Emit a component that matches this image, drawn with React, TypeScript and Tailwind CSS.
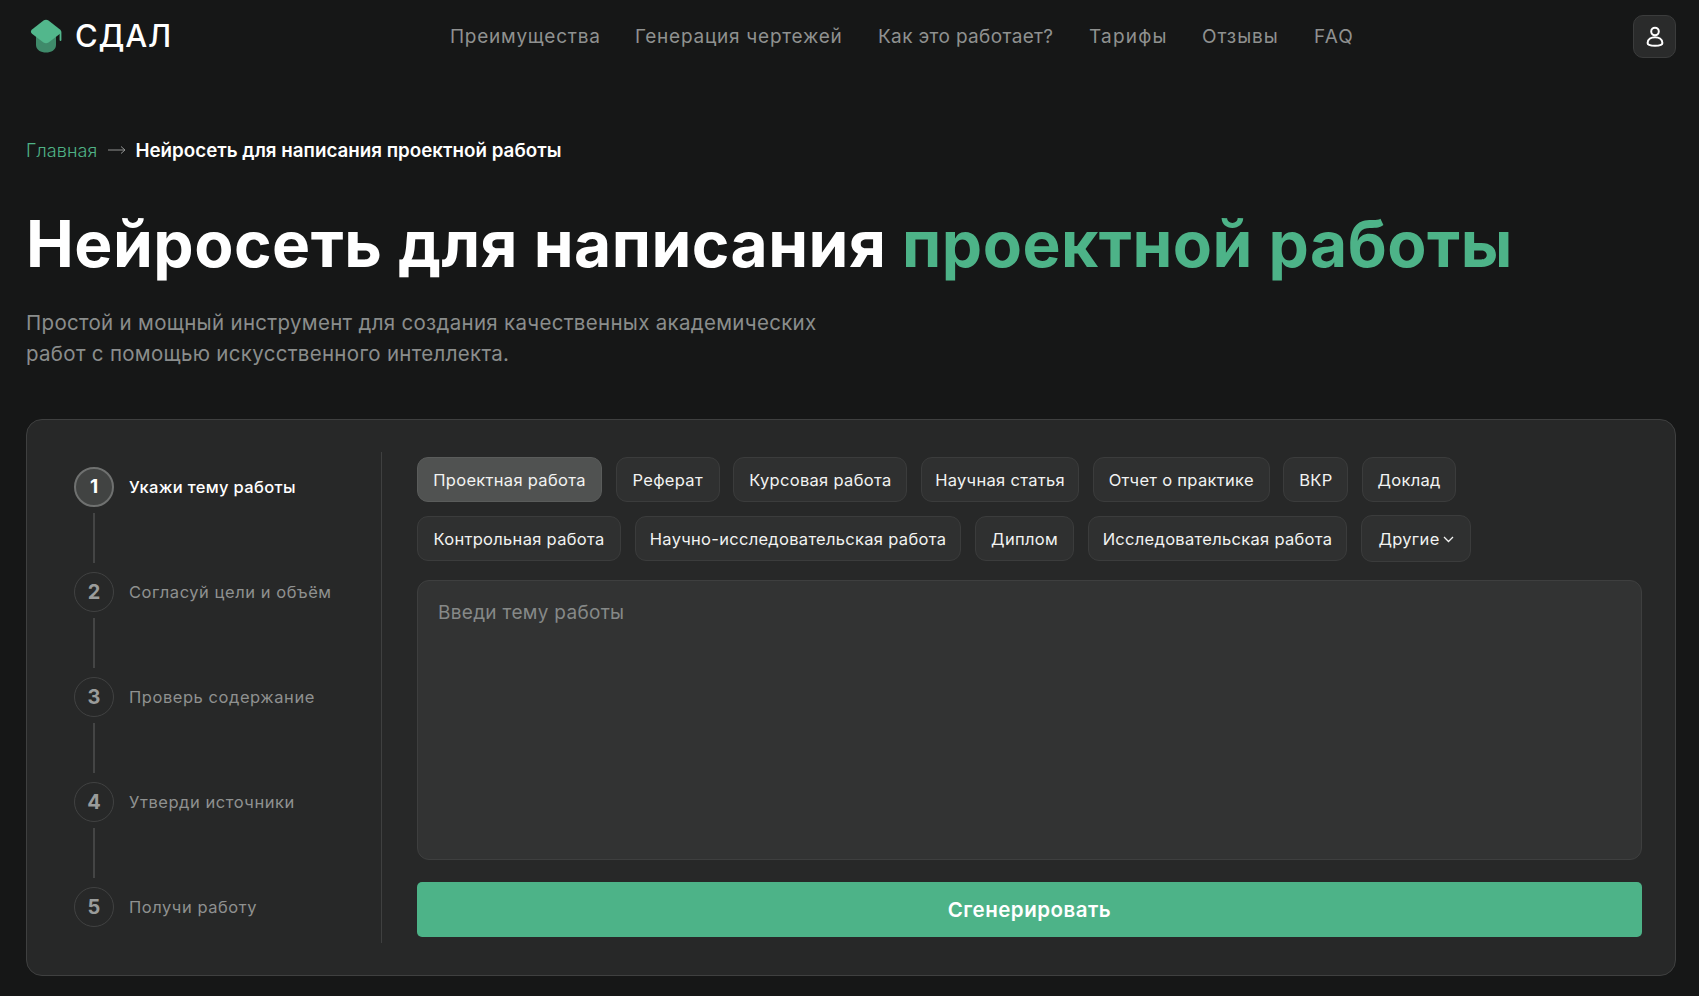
const navItems = [
  { label: "Преимущества", cls: "w-[150px] tracking-[0.75px]" },
  { label: "Генерация чертежей", cls: "w-[208px] tracking-[0.75px]" },
  { label: "Как это работает?", cls: "w-[176px] tracking-[0.35px]" },
  { label: "Тарифы", cls: "w-[78px] tracking-[1.2px]" },
  { label: "Отзывы", cls: "w-[77px] tracking-[0.9px]" },
  { label: "FAQ", cls: "w-[40px] tracking-[1.2px]" },
]

const rowOne = [
  { label: "Проектная работа", w: "w-[185px]", active: true },
  { label: "Реферат", w: "w-[104px]" },
  { label: "Курсовая работа", w: "w-[174px]" },
  { label: "Научная статья", w: "w-[158px]" },
  { label: "Отчет о практике", w: "w-[177px]" },
  { label: "ВКР", w: "w-[65px]" },
  { label: "Доклад", w: "w-[94px]" },
]

const rowTwo = [
  { label: "Контрольная работа", w: "w-[204px]" },
  { label: "Научно-исследовательская работа", w: "w-[326px]" },
  { label: "Диплом", w: "w-[99px]" },
  { label: "Исследовательская работа", w: "w-[259px]" },
]

const steps = ["Укажи тему работы", "Согласуй цели и объём", "Проверь содержание", "Утверди источники", "Получи работу"]

function Logo() {
  return (
    <svg width="32" height="34" viewBox="0 0 32 34" fill="none">
      <path d="M6 12 H26 V26 C26 31 21 33.5 16 33.5 C11 33.5 6 31 6 26 Z" fill="#3f8a6a" />
      <path d="M2 10.5 L13.5 1.6 C15 0.5 17 0.5 18.5 1.6 L30 10.5 C31.5 12 31.5 13.5 30 14.7 L18.5 23.4 C17 24.5 15 24.5 13.5 23.4 L2 14.7 C0.5 13.5 0.5 12 2 10.5 Z" fill="#52b78c" />
      <rect x="29.6" y="12" width="1.8" height="10" rx="0.9" fill="#52b78c" />
    </svg>
  )
}

function UserIcon() {
  return (
    <svg width="20" height="22" viewBox="0 0 20 22" fill="none" stroke="white" strokeWidth="2">
      <circle cx="10" cy="5.5" r="3.8" />
      <path d="M2.6 17 C2.6 13 6.4 11.3 10 11.3 C13.6 11.3 17.4 13 17.4 17 C17.4 19.2 14.4 19.8 10 19.8 C5.6 19.8 2.6 19.2 2.6 17 Z" />
    </svg>
  )
}

function Chip({ label, w, active }: { label: string; w: string; active?: boolean }) {
  return (
    <button
      className={`${w} ${
        active ? "border-[#5a5c5b] bg-[#505251]" : "border-[#3b3c3c] bg-[#2f3030]"
      } h-[45px] pt-px rounded-[11px] border text-[#f2f3f2] text-[16.5px] tracking-[0.3px] whitespace-nowrap`}
    >
      {label}
    </button>
  )
}

function Step({ n, label, active, last }: { n: number; label: string; active?: boolean; last?: boolean }) {
  return (
    <div>
      <div className="flex items-center gap-[15px] h-[40px]">
        <div
          className={
            active
              ? "w-[40px] h-[40px] rounded-full border-2 border-[#6f7170] bg-[#414342] flex items-center justify-center text-white text-[19px] font-bold"
              : "w-[40px] h-[40px] rounded-full border border-[#414242] flex items-center justify-center text-[#9a9c9b] text-[20px] font-bold"
          }
        >
          {n}
        </div>
        <span className={active ? "text-white text-[16.5px] font-medium tracking-[0.35px]" : "text-[#8f9190] text-[16.5px] tracking-[0.55px]"}>
          {label}
        </span>
      </div>
      {!last && <div className="ml-[19px] w-[2px] h-[50px] mt-[6px] mb-[9px] bg-[#444545]" />}
    </div>
  )
}

export default function App() {
  return (
    <div className="min-h-screen bg-[#161717] text-white pl-[26px] pr-[23px] pb-[21px] font-['Inter','Noto_Sans',sans-serif]">
      {/* Header */}
      <header className="h-[73px] flex items-start">
        <div className="flex items-center gap-[13px] w-[424px] pt-[19px] pl-[4px]">
          <Logo />
          <span className="text-[31px] leading-[34px] font-medium tracking-[0.8px]">СДАЛ</span>
        </div>
        <nav className="flex gap-[35px] pt-[25px]">
          {navItems.map((item) => (
            <a key={item.label} className={`${item.cls} text-[19px] leading-[24px] text-[#8f9190] whitespace-nowrap`}>
              {item.label}
            </a>
          ))}
        </nav>
        <button className="ml-auto mt-[15px] w-[43px] h-[43px] rounded-[10px] bg-[#2a2b2b] border border-[#3b3c3c] flex items-center justify-center">
          <UserIcon />
        </button>
      </header>

      {/* Breadcrumbs */}
      <div className="flex items-center mt-[65px] h-[24px]">
        <span className="text-[18px] text-[#4fb286] tracking-[0.1px] font-light">Главная</span>
        <svg className="ml-[11px] mr-[9px]" width="18" height="10" viewBox="0 0 18 10" fill="none" stroke="#8f9190" strokeWidth="1">
          <path d="M0 5 H17 M13 1.5 L17 5 L13 8.5" />
        </svg>
        <span className="text-[18.8px] font-semibold pt-[2px]">Нейросеть для написания проектной работы</span>
      </div>

      <h1 className="mt-[46px] text-[64px] leading-[72px] font-bold tracking-[0.5px] whitespace-nowrap">
        Нейросеть для написания <span className="text-[#4db388]">проектной работы</span>
      </h1>

      <p className="mt-[27px] text-[20.5px] leading-[31px] text-[#8a8d8c] tracking-[0.3px] whitespace-nowrap">
        Простой и мощный инструмент для создания качественных академических
        <br />
        работ с помощью искусственного интеллекта.
      </p>

      {/* Generator card */}
      <section className="mt-[50px] h-[557px] rounded-[16px] border border-[#3f4040] bg-[#272828] pl-[47px] pr-[33px] py-[32px] flex">
        <div className="w-[308px] border-r border-[#3f4040] py-[15px] shrink-0">
          {steps.map((s, i) => (
            <Step key={s} n={i + 1} label={s} active={i === 0} last={i === steps.length - 1} />
          ))}
        </div>

        <div className="flex-1 pl-[35px] py-[5px] flex flex-col">
          <div className="flex gap-[13.7px]">
            {rowOne.map((c) => (
              <Chip key={c.label} label={c.label} w={c.w} active={c.active} />
            ))}
          </div>
          <div className="flex gap-[14px] mt-[13px] items-center h-[47px] -mb-px">
            {rowTwo.map((c) => (
              <Chip key={c.label} label={c.label} w={c.w} />
            ))}
            <button className="w-[110px] h-[47px] pt-px rounded-[11px] border border-[#3b3c3c] bg-[#2f3030] text-[#f2f3f2] text-[16.5px] tracking-[0.3px] flex items-center justify-center gap-[3px]">
              Другие
              <svg width="11" height="7" viewBox="0 0 11 7" fill="none" stroke="#f2f3f2" strokeWidth="1.3">
                <path d="M1 1 L5.5 5.5 L10 1" />
              </svg>
            </button>
          </div>
          <div className="mt-[19px] h-[280px] rounded-[12px] border border-[#3e3f3f] bg-[#323333] px-[20px] pt-[19px] text-[19px] leading-[26px] text-[#868988] tracking-[0.3px]">
            Введи тему работы
          </div>
          <button className="mt-[22px] h-[55px] pt-px rounded-[5px] bg-[#4db388] text-white text-[20.5px] font-semibold tracking-[0.5px]">
            Сгенерировать
          </button>
        </div>
      </section>
    </div>
  )
}
